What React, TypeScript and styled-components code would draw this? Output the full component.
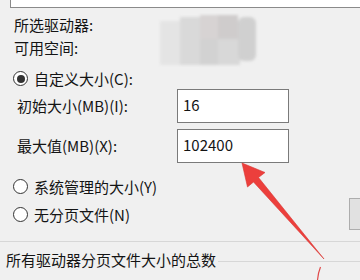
import React from "react";
import styled, { createGlobalStyle } from "styled-components";

// ---------------------------------- GLOBAL ----------------------------------
const GlobalStyle = createGlobalStyle`
  html, body {
    margin: 0;
    padding: 0;
    background: #f0f0f0;
  }
  body {
    font-family: "Noto Sans CJK SC", "Noto Sans", sans-serif;
    color: #141414;
  }
`;

// ---------------------------------- PARTS ----------------------------------
const Redacted = () => (
  <StyledRedacted width="104" height="56" viewBox="0 0 104 56">
    <defs>
      <filter id="soft" x="-10%" y="-10%" width="120%" height="120%">
        <feGaussianBlur stdDeviation="1.6" />
      </filter>
    </defs>
    <g filter="url(#soft)">
      <rect x="2" y="8" width="22" height="44" fill="#e4e4e4" />
      <rect x="22" y="4" width="22" height="48" fill="#d9d9d9" />
      <rect x="42" y="2" width="20" height="26" fill="#d7d3d3" />
      <rect x="42" y="26" width="20" height="26" fill="#d2d2d2" />
      <rect x="60" y="2" width="20" height="26" fill="#cfcccc" />
      <rect x="60" y="26" width="22" height="26" fill="#d8d8d8" />
      <rect x="80" y="4" width="18" height="44" rx="6" fill="#d0d0d0" />
    </g>
  </StyledRedacted>
);

const Arrow = () => (
  <StyledArrow width="360" height="280" viewBox="0 0 360 280">
    <polygon
      points="242,163 265,172.5 258.5,177.5 324,259 253.5,182 247.5,187"
      fill="#ec3f3c"
      stroke="#d83532"
      strokeWidth="0.6"
      strokeLinejoin="round"
    />
    <path d="M320.5 267 Q318 273 317.5 280" stroke="#e04a4a" strokeWidth="1.2" fill="none" />
  </StyledArrow>
);

interface RadioProps {
  checked?: boolean;
  label: string;
}

const Radio = ({ checked, label }: RadioProps) => (
  <StyledRadioRow>
    <StyledCircle>{checked ? <StyledDot /> : null}</StyledCircle>
    <span>{label}</span>
  </StyledRadioRow>
);

// ---------------------------------- APP ----------------------------------
const App = () => {
  return (
    <StyledPage>
      <GlobalStyle />
      <StyledTopBox />
      <StyledInfo>
        <StyledInfoRow>所选驱动器:</StyledInfoRow>
        <StyledInfoRow>可用空间:</StyledInfoRow>
        <Redacted />
      </StyledInfo>
      <StyledCustom>
        <Radio checked label="自定义大小(C):" />
      </StyledCustom>
      <StyledFields>
        <StyledFieldLabel>初始大小(MB)(I):</StyledFieldLabel>
        <StyledInput>16</StyledInput>
        <StyledFieldLabel>最大值(MB)(X):</StyledFieldLabel>
        <StyledInput>102400</StyledInput>
      </StyledFields>
      <StyledOptions>
        <div>
          <Radio label="系统管理的大小(Y)" />
          <Radio label="无分页文件(N)" />
        </div>
        <StyledSetButton />
      </StyledOptions>
      <StyledDivider />
      <StyledGroupTitle>
        <span>所有驱动器分页文件大小的总数</span>
        <StyledGroupLine />
      </StyledGroupTitle>
      <Arrow />
    </StyledPage>
  );
};

export default App;

// ---------------------------------- STYLES ----------------------------------
const StyledPage = styled.div`
  position: relative;
  width: 360px;
  height: 280px;
  overflow: hidden;
  background: #f0f0f0;
  font-size: 15px;
`;

const StyledTopBox = styled.div`
  margin-left: 10px;
  height: 7px;
  background: #fff;
  border-left: 1px solid #8a8a8a;
  border-bottom: 1px solid #8a8a8a;
`;

const StyledInfo = styled.div`
  position: relative;
  padding: 5px 0 0 14px;
`;

const StyledInfoRow = styled.div`
  height: 23px;
  line-height: 23px;
`;

const StyledRedacted = styled.svg`
  position: absolute;
  left: 158px;
  top: 5px;
`;

const StyledCustom = styled.div`
  margin-top: 9px;
  padding-left: 13px;
  height: 21px;
`;

const StyledRadioRow = styled.div`
  display: flex;
  align-items: center;
  gap: 6px;
  height: 28px;
  ${StyledCustom} & {
    height: 21px;
  }
`;

const StyledCircle = styled.div`
  width: 15px;
  height: 15px;
  box-sizing: border-box;
  border: 1px solid #333;
  border-radius: 50%;
  background: #fff;
  display: flex;
  align-items: center;
  justify-content: center;
`;

const StyledDot = styled.div`
  width: 8px;
  height: 8px;
  border-radius: 50%;
  background: #333;
`;

const StyledFields = styled.div`
  display: grid;
  grid-template-columns: 160px 112px;
  row-gap: 6px;
  align-items: center;
  padding-left: 17px;
`;

const StyledFieldLabel = styled.div`
  line-height: 20px;
`;

const StyledInput = styled.div`
  box-sizing: border-box;
  height: 34px;
  border: 1px solid #7a7a7a;
  background: #fff;
  padding-left: 5px;
  line-height: 30px;
  font-size: 15px;
`;

const StyledOptions = styled.div`
  display: flex;
  justify-content: space-between;
  align-items: flex-start;
  margin-top: 9px;
  padding-left: 13px;
`;

const StyledSetButton = styled.div`
  box-sizing: border-box;
  width: 16px;
  height: 32px;
  margin: 26px -5px 0 0;
  background: #e1e1e1;
  border: 1px solid #adadad;
`;

const StyledDivider = styled.div`
  margin-top: 11px;
  height: 1px;
  background: #d7d7d7;
`;

const StyledGroupTitle = styled.div`
  display: flex;
  align-items: center;
  gap: 2px;
  height: 20px;
  margin-top: 8px;
  padding-left: 6px;
  line-height: 20px;
  white-space: nowrap;
`;

const StyledGroupLine = styled.div`
  flex: 1;
  height: 1px;
  background: #d7d7d7;
  margin-top: 3px;
`;

const StyledArrow = styled.svg`
  position: absolute;
  left: 0;
  top: 0;
  pointer-events: none;
`;
